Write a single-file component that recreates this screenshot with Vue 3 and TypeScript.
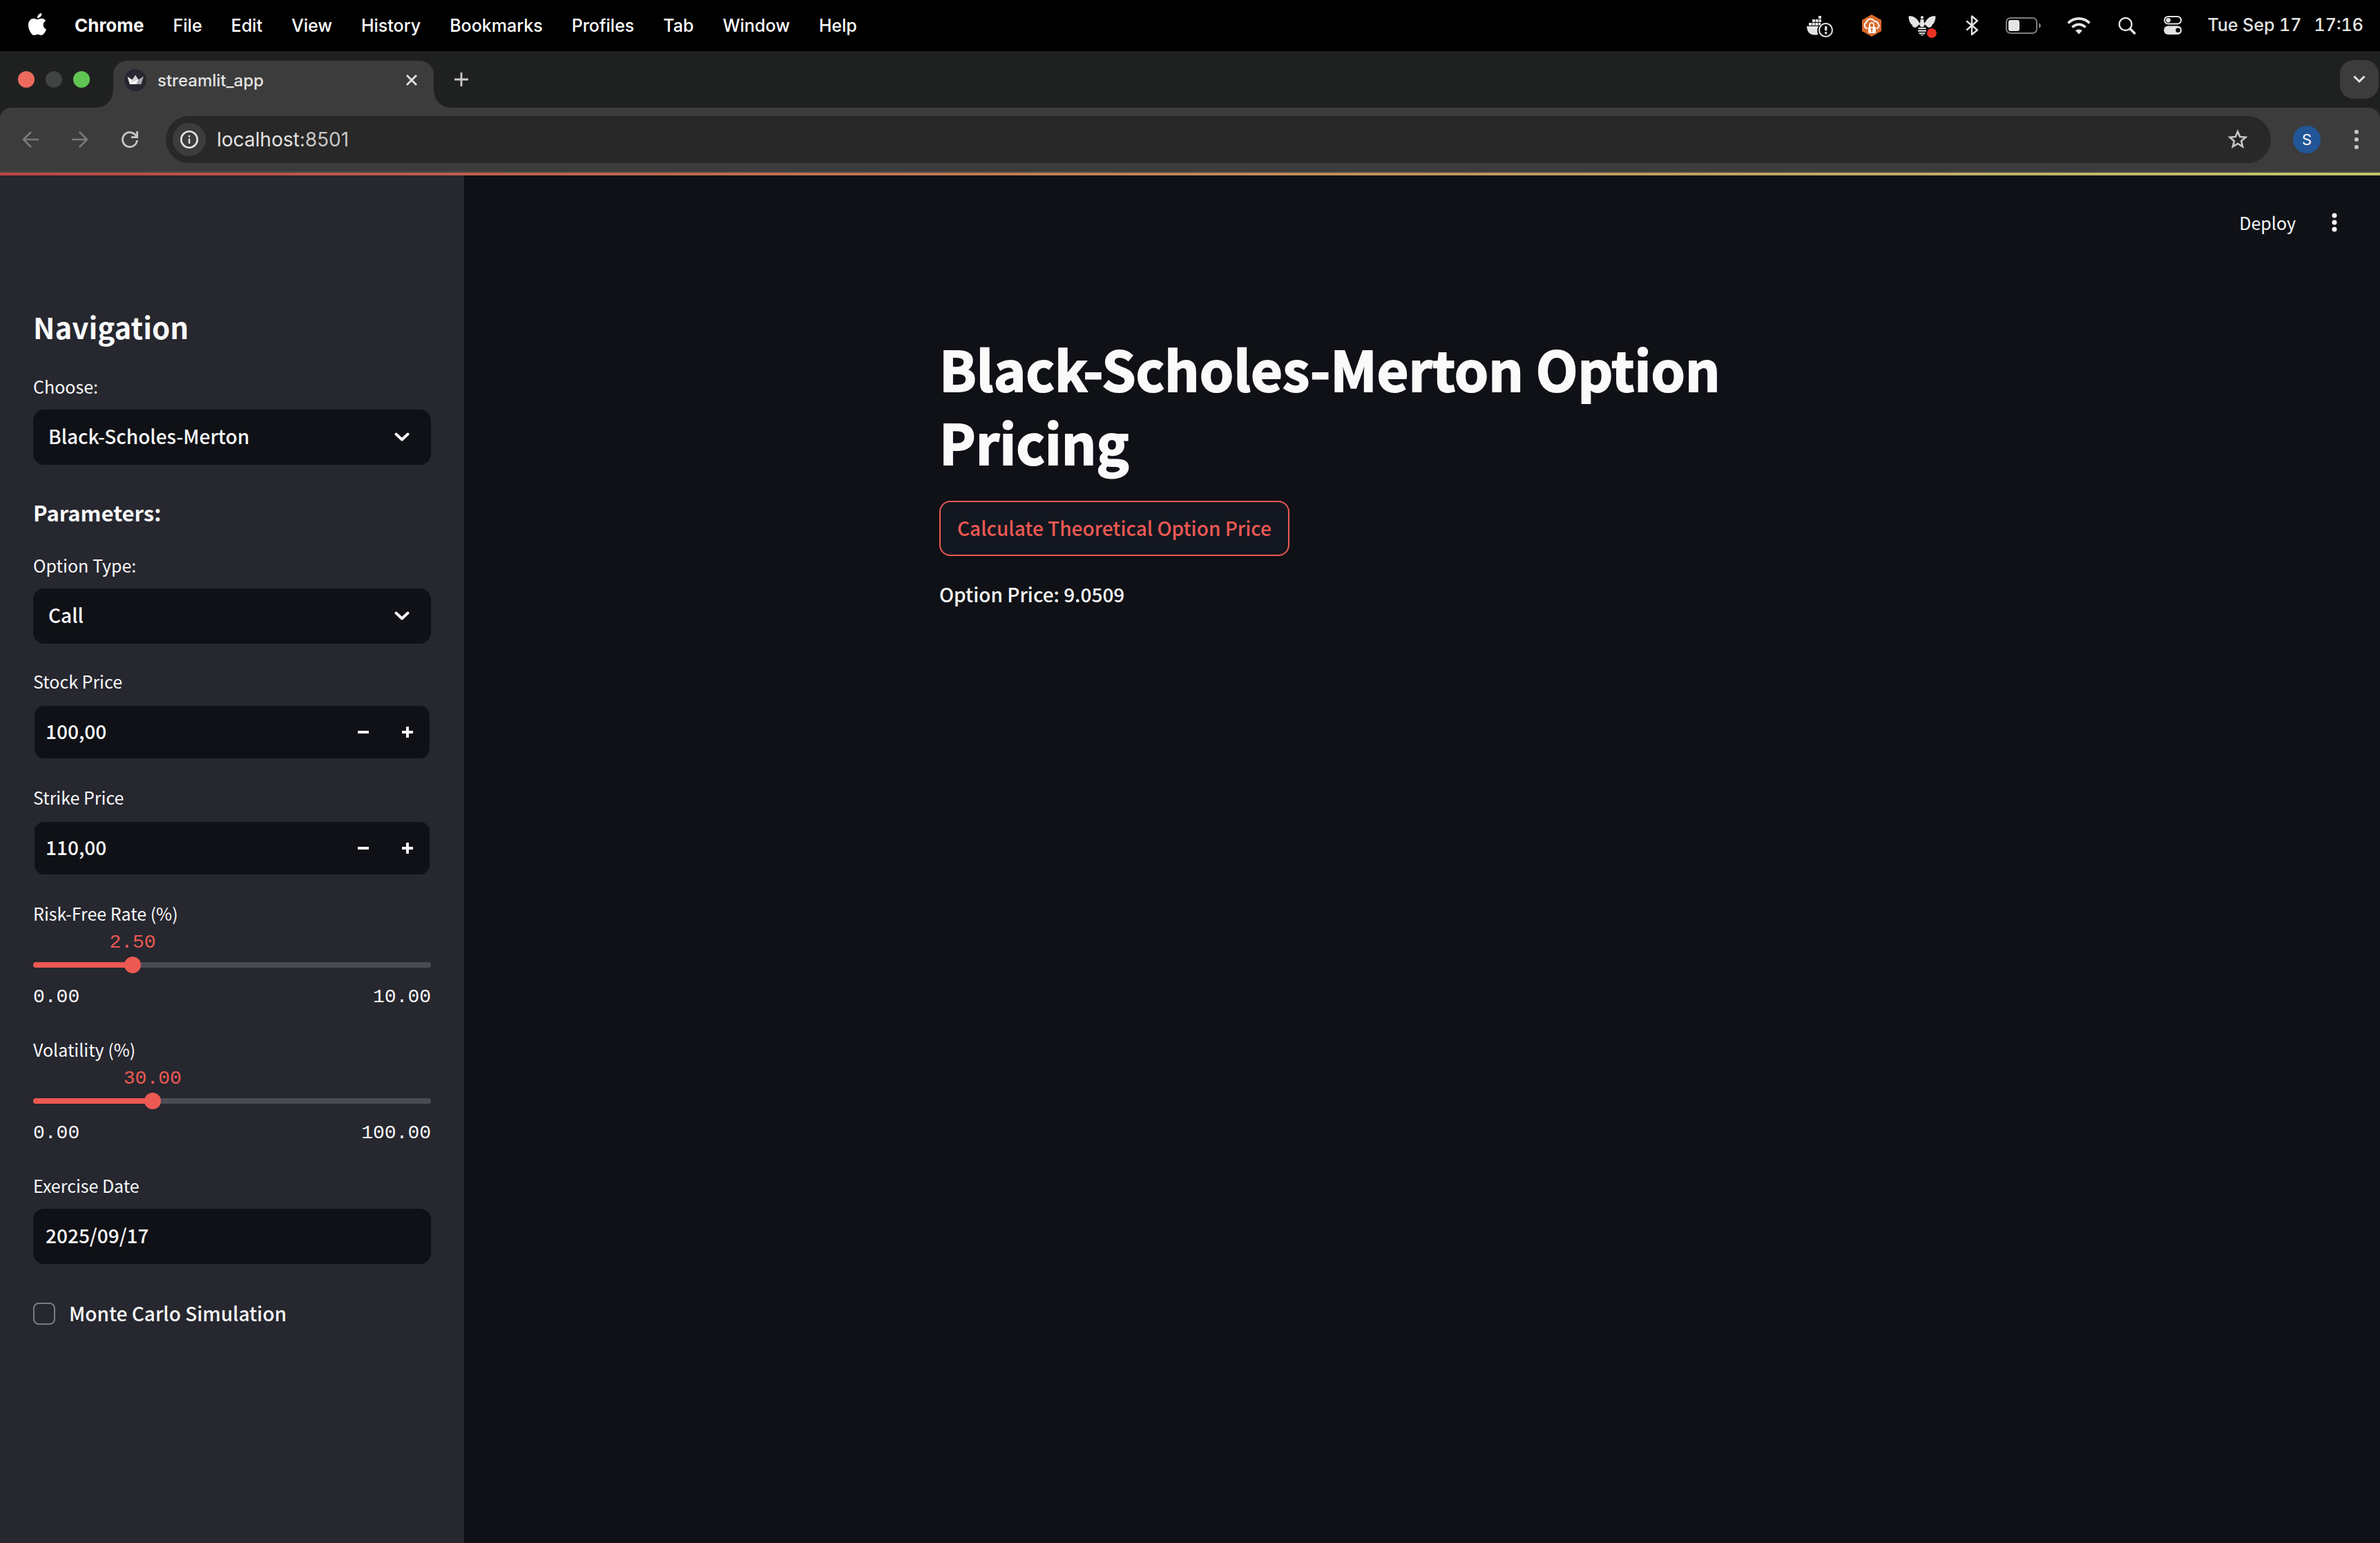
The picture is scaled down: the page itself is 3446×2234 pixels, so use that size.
<script setup lang="ts">
import { ref, computed } from 'vue'

const menus = ['File', 'Edit', 'View', 'History', 'Bookmarks', 'Profiles', 'Tab', 'Window', 'Help']

const page = ref('Black-Scholes-Merton')
const optionType = ref('Call')
const exerciseDate = ref('2025/09/17')
const monteCarlo = ref(false)
const optionPrice = ref('9.0509')

const amounts = ref([
  { id: 'stock', label: 'Stock Price', value: '100,00' },
  { id: 'strike', label: 'Strike Price', value: '110,00' },
])

const rates = ref([
  { id: 'rate', label: 'Risk-Free Rate (%)', value: 2.5, max: 10 },
  { id: 'vol', label: 'Volatility (%)', value: 30, max: 100 },
])

const sliders = computed(() =>
  rates.value.map((r) => ({ ...r, percent: `${(r.value / r.max) * 100}%` })),
)

function step(index: number, delta: number) {
  const item = amounts.value[index]
  const next = parseFloat(item.value.replace(',', '.')) + delta
  item.value = next.toFixed(2).replace('.', ',')
}

function setRate(index: number, event: Event) {
  rates.value[index].value = Number((event.target as HTMLInputElement).value)
}
</script>

<template>
  <div class="screen">
    <header class="menubar">
      <svg class="apple" viewBox="0 0 24 24" aria-hidden="true"><path fill="#fff" d="M12.152 6.896c-.948 0-2.415-1.078-3.96-1.04-2.04.027-3.91 1.183-4.961 3.014-2.117 3.675-.546 9.103 1.519 12.09 1.013 1.454 2.208 3.09 3.792 3.039 1.52-.065 2.09-.987 3.935-.987 1.831 0 2.35.987 3.96.948 1.637-.026 2.676-1.48 3.676-2.948 1.156-1.688 1.636-3.325 1.662-3.415-.039-.013-3.182-1.221-3.22-4.857-.026-3.04 2.48-4.494 2.597-4.559-1.429-2.09-3.623-2.324-4.39-2.376-2-.156-3.675 1.09-4.61 1.09zM15.53 3.83c.843-1.012 1.4-2.427 1.245-3.83-1.207.052-2.662.805-3.532 1.818-.78.896-1.454 2.338-1.273 3.714 1.338.104 2.715-.688 3.559-1.701" /></svg>
      <nav class="menus">
        <strong>Chrome</strong>
        <span v-for="m in menus" :key="m">{{ m }}</span>
      </nav>
      <div class="status">
        <svg width="43" height="40" viewBox="0 0 43 40" fill="#e4e4e4" aria-hidden="true">
          <path d="M17 6h4v4h-4zM8 11h4v4H8zM12.700 11h4v4h-4zM17.400 11h3.600v4h-3.600zM3 16h4v4H3zM7.700 16h4v4h-4zM12.400 16h4v4h-4zM17 16h3v3l-3 1z" />
          <path d="M0 21h17a13 13 0 0 0-.500 12c-9 2-16-1-16.500-12z" />
          <circle cx="27.500" cy="26.500" r="9.500" fill="none" stroke="#e4e4e4" stroke-width="2" />
          <rect x="26" y="21" width="3.400" height="6.600" rx="1" />
          <circle cx="27.700" cy="30.700" r="1.800" />
        </svg>
        <svg width="32" height="40" viewBox="0 0 32 40" aria-hidden="true">
          <path fill="#db6a2c" d="M15 4l14 8v16l-14 8-14-8V12z" />
          <path fill="none" stroke="#fff" stroke-width="2" d="M9 24H8a4.500 4.500 0 0 1-.600-8.500 5 5 0 0 1 2.600-4 6.500 6.500 0 0 1 9 2.500 4.500 4.500 0 0 1 5 3 4 4 0 0 1-1 7h-1" />
          <path fill="none" stroke="#fff" stroke-width="1.600" d="M12 22v-3a3 3 0 0 1 6 0v3" />
          <path fill="#fff" fill-rule="evenodd" d="M10 22h11v9H10zM15 23.500a1.500 1.500 0 0 0-.700 2.800V29h1.700v-2.700a1.500 1.500 0 0 0-1-2.800z" />
        </svg>
        <svg width="44" height="40" viewBox="0 0 44 40" fill="#e4e4e4" aria-hidden="true">
          <path d="M.500 6.500c6-1.500 13 3 16.500 11.500-3 1-3.500 3.500-5.500 4.500-3 1-6-.500-5.500-3C2.500 17 .500 12 .500 6.500zM39.500 6.500c-6-1.500-13 3-16.500 11.500 3 1 3.500 3.500 5.500 4.500 3 1 6-.500 5.500-3 3.500-2.500 5.500-7.500 5.500-13z" />
          <path d="M18 8a2 2 0 0 1 4 0v2h-4zM17.500 11h5v3l1.500 4-2 4h-4l-2-4 1.500-4z" />
          <path d="M14.500 23h11v2h-11zM14 26.500h12v2.200H14zM15 30.200h10l-1 2h-8zM17 33.200h6l-3 1.600z" />
          <circle cx="34" cy="31" r="7" fill="#ea3323" />
        </svg>
        <svg width="25" height="40" viewBox="0 0 25 40" aria-hidden="true">
          <path fill="none" stroke="#e4e4e4" stroke-width="2.400" stroke-linecap="round" stroke-linejoin="round" d="M5 14l15 12.500-8 6.500V6.500l8 6.500L5 26" />
        </svg>
        <svg width="52" height="40" viewBox="0 0 52 40" aria-hidden="true">
          <rect x="1" y="9" width="44" height="22" rx="6" fill="none" stroke="#7d7d7d" stroke-width="2" />
          <rect x="4" y="12" width="16" height="16" rx="3" fill="#e4e4e4" />
          <path d="M48 16.500c4 1 4 6 0 7z" fill="#7d7d7d" />
        </svg>
        <svg width="38" height="40" viewBox="0 0 38 40" fill="none" stroke="#e4e4e4" stroke-width="3.800" aria-hidden="true">
          <path d="M2.500 16.500a21.500 21.500 0 0 1 31 0M8.500 22.500a13 13 0 0 1 19 0" />
          <path fill="#e4e4e4" stroke="none" d="M18 32.500l5-5.200a7.500 7.500 0 0 0-10 0z" />
        </svg>
        <svg width="30" height="40" viewBox="0 0 30 40" fill="none" stroke="#e4e4e4" aria-hidden="true">
          <circle cx="11.500" cy="18" r="9" stroke-width="2.400" /><path stroke-width="3.600" stroke-linecap="round" d="M18.500 25l6 6" />
        </svg>
        <svg width="28" height="40" viewBox="0 0 28 40" aria-hidden="true">
          <rect x="2" y="7" width="24" height="10.500" rx="5.250" fill="none" stroke="#e4e4e4" stroke-width="2" />
          <circle cx="7.500" cy="12.300" r="3.300" fill="#e4e4e4" />
          <rect x="1" y="20.500" width="26" height="12.500" rx="6.250" fill="#e4e4e4" />
          <circle cx="21.500" cy="26.700" r="3.300" fill="#000" />
        </svg>
        <span class="clock"><span>Tue Sep 17</span><span>17:16</span></span>
      </div>
    </header>

    <div class="tabstrip">
      <div class="lights"><i class="red"></i><i class="grey"></i><i class="green"></i></div>
      <div class="tab">
        <svg width="32" height="32" viewBox="0 0 32 32" aria-hidden="true">
          <circle cx="16" cy="16" r="16" fill="#262730" />
          <path fill="#fff" d="M4.500 11l7 4.500L16 9l4.500 6.500 7-4.500-3.500 11H8z" />
          <path fill="#d0d0d4" d="M16 9l4.500 6.500-11.500 4z" /><path fill="#a9a9b0" d="M27.500 11l-7 4.500L17 22h7z" />
        </svg>
        <span class="tabtitle">streamlit_app</span>
        <button class="bare" type="button" aria-label="Close tab"><svg width="16" height="16" viewBox="0 0 16 16"><path d="M1 1l14 14M15 1L1 15" stroke="#e3e3e3" stroke-width="2.800" /></svg></button>
      </div>
      <button class="bare newtab" type="button" aria-label="New tab"><svg width="20" height="20" viewBox="0 0 20 20"><path d="M10 0v20M0 10h20" stroke="#c9c9c9" stroke-width="2.800" /></svg></button>
      <button class="bare tabsearch" type="button" aria-label="Search tabs"><svg width="18" height="12" viewBox="0 0 18 12"><path d="M1.500 1.500L9 9l7.500-7.500" fill="none" stroke="#e3e3e3" stroke-width="3" /></svg></button>
    </div>

    <div class="toolbar">
      <button class="bare" type="button" aria-label="Back"><svg width="24" height="24" viewBox="0 0 24 24" fill="none" stroke="#7b7b7b" stroke-width="2.600"><path d="M24 12H2M13 1L2 12l11 11" /></svg></button>
      <button class="bare" type="button" aria-label="Forward"><svg width="24" height="24" viewBox="0 0 24 24" fill="none" stroke="#7b7b7b" stroke-width="2.600"><path d="M0 12h22M11 1l11 11-11 11" /></svg></button>
      <button class="bare" type="button" aria-label="Reload"><svg width="24" height="24" viewBox="0 0 24 24" fill="none" stroke="#c7c7c7" stroke-width="2.800"><path d="M22.500 13A10.500 10.500 0 1 1 19.500 4.700l3 3M22.600 0v8.600H14" /></svg></button>
      <div class="omnibox">
        <span class="info"><svg width="26" height="26" viewBox="0 0 26 26" fill="none" stroke="#e3e3e3"><circle cx="13" cy="13" r="11.700" stroke-width="2.600" /><path d="M13 11.500V19M13 7v2.500" stroke-width="2.400" /></svg></span>
        <span class="url">localhost<span>:8501</span></span>
        <button class="bare" type="button" aria-label="Bookmark this tab"><svg width="30" height="30" viewBox="0 0 30 30" fill="none" stroke="#c7c7c7" stroke-width="2.600"><path d="M15 3.500l3.200 7.600 8.200.700-6.200 5.400 1.900 8L15 20.900l-7.100 4.300 1.900-8-6.200-5.400 8.200-.700z" /></svg></button>
      </div>
      <span class="avatar">S</span>
      <button class="bare" type="button" aria-label="Browser menu"><svg width="6" height="28" viewBox="0 0 6 28" fill="#c7c7c7"><circle cx="3" cy="3" r="3" /><circle cx="3" cy="14" r="3" /><circle cx="3" cy="25" r="3" /></svg></button>
    </div>
    <div class="stripe"></div>

    <div class="app">
      <aside class="sidebar">
        <h2>Navigation</h2>

        <div class="field">
          <label for="page">Choose:</label>
          <div class="selectbox">
            <select id="page" v-model="page"><option>Black-Scholes-Merton</option></select>
            <svg width="22" height="14" viewBox="0 0 22 14"><path d="M2.500 2.500L11 10.500l8.500-8" fill="none" stroke="#fafafa" stroke-width="4" stroke-linecap="round" stroke-linejoin="round" /></svg>
          </div>
        </div>

        <h3>Parameters:</h3>

        <div class="field">
          <label for="type">Option Type:</label>
          <div class="selectbox">
            <select id="type" v-model="optionType"><option>Call</option><option>Put</option></select>
            <svg width="22" height="14" viewBox="0 0 22 14"><path d="M2.500 2.500L11 10.500l8.500-8" fill="none" stroke="#fafafa" stroke-width="4" stroke-linecap="round" stroke-linejoin="round" /></svg>
          </div>
        </div>

        <div v-for="(a, i) in amounts" :key="a.id" class="field">
          <label :for="a.id">{{ a.label }}</label>
          <div class="numberbox">
            <input :id="a.id" v-model="a.value" type="text" inputmode="decimal" />
            <button type="button" :aria-label="`Decrease ${a.label}`" @click="step(i, -1)"><svg width="16" height="16" viewBox="0 0 16 16"><path d="M0 8h16" stroke="#fafafa" stroke-width="4" /></svg></button>
            <button type="button" :aria-label="`Increase ${a.label}`" @click="step(i, 1)"><svg width="16" height="16" viewBox="0 0 16 16"><path d="M0 8h16M8 0v16" stroke="#fafafa" stroke-width="4" /></svg></button>
          </div>
        </div>

        <div v-for="(s, i) in sliders" :key="s.id" class="field slider">
          <label :for="s.id">{{ s.label }}</label>
          <output :for="s.id" :style="{ marginLeft: s.percent }">{{ s.value.toFixed(2) }}</output>
          <div class="rail">
            <div class="track"><div class="fill" :style="{ width: s.percent }"></div></div>
            <input :id="s.id" type="range" min="0" :max="s.max" step="0.01" :value="s.value" @input="setRate(i, $event)" />
          </div>
          <div class="ticks"><span>0.00</span><span>{{ s.max.toFixed(2) }}</span></div>
        </div>

        <div class="field">
          <label for="date">Exercise Date</label>
          <input id="date" v-model="exerciseDate" class="datebox" type="text" />
        </div>

        <label class="check"><input v-model="monteCarlo" type="checkbox" /><span>Monte Carlo Simulation</span></label>
      </aside>

      <main class="main">
        <div class="actions">
          <button class="bare deploy" type="button">Deploy</button>
          <button class="bare" type="button" aria-label="Main menu"><svg width="8" height="28" viewBox="0 0 8 28" fill="#fafafa"><circle cx="4" cy="4" r="3.500" /><circle cx="4" cy="14" r="3.500" /><circle cx="4" cy="24" r="3.500" /></svg></button>
        </div>
        <section class="content">
          <h1>Black-Scholes-Merton Option<br />Pricing</h1>
          <button class="calculate" type="button">Calculate Theoretical Option Price</button>
          <p>Option Price: {{ optionPrice }}</p>
        </section>
      </main>
    </div>
  </div>
</template>

<style>
html,
body,
#app {
  height: 100%;
}

body {
  background: #0f1116;
}
</style>

<style scoped>
* {
  box-sizing: border-box;
}

.screen {
  display: flex;
  flex-direction: column;
  min-height: 100%;
  background: #1f2120;
  color: #fafafa;
  font-family: "Noto Sans CJK SC", "Open Sans", sans-serif;
  font-size: 28px;
  font-weight: 500;
}

svg {
  display: block;
  flex: none;
}

button,
input,
select {
  margin: 0;
  padding: 0;
  border: 0;
  background: none;
  color: inherit;
  font: inherit;
  appearance: none;
}

.menubar,
.tabstrip,
.toolbar {
  display: flex;
  align-items: center;
  font-family: Inter, "Liberation Sans", sans-serif;
  font-weight: 400;
}

.menubar {
  height: 74px;
  padding: 0 24px 0 38px;
  background: #000;
  color: #fff;
  font-size: 25px;
  font-weight: 500;
}

.apple {
  width: 32px;
  height: 32px;
  margin-bottom: 4px;
}

.menus {
  display: flex;
  align-items: baseline;
  gap: 42px;
  margin-left: 38px;
  padding-bottom: 2px;
}

.menus strong {
  font-size: 26px;
}

.status {
  display: flex;
  align-items: center;
  gap: 36px;
  margin-left: auto;
}

.clock {
  display: flex;
  gap: 18px;
  padding-bottom: 2px;
  color: #e4e4e4;
  font-variant-numeric: tabular-nums;
}

.tabstrip {
  height: 82px;
  padding: 0 2px 0 26px;
}

.lights {
  display: flex;
  gap: 16px;
}

.lights i {
  width: 24px;
  height: 24px;
  border-radius: 50%;
}

.red {
  background: #ec6a5e;
}

.grey {
  background: #424443;
}

.green {
  background: #61c554;
}

.tab {
  position: relative;
  display: flex;
  align-items: center;
  align-self: flex-end;
  width: 464px;
  height: 68px;
  margin-left: 34px;
  padding: 0 24px 12px 16px;
  border-radius: 20px 20px 0 0;
  background: #3c3c3c;
  color: #e3e3e3;
  font-size: 24px;
}

.tab::before,
.tab::after {
  content: "";
  position: absolute;
  bottom: 0;
  width: 24px;
  height: 24px;
}

.tab::before {
  right: 100%;
  background: radial-gradient(circle at 0 0, transparent 23px, #3c3c3c 24px);
}

.tab::after {
  left: 100%;
  background: radial-gradient(circle at 100% 0, transparent 23px, #3c3c3c 24px);
}

.tabtitle {
  flex: 1;
  margin-left: 16px;
  font-weight: 500;
}

.newtab {
  margin-left: 30px;
}

.tabsearch {
  display: grid;
  place-items: center;
  width: 56px;
  height: 56px;
  margin-left: auto;
  border-radius: 20px;
  background: #3c3c3c;
}

.toolbar {
  gap: 48px;
  height: 94px;
  padding: 0 31px 0 32px;
  border-bottom: 2px solid #484848;
  border-radius: 16px 16px 0 0;
  background: #3c3c3c;
}

.omnibox {
  display: flex;
  flex: 1;
  align-items: center;
  height: 68px;
  margin-left: -8px;
  padding: 0 33px 0 10px;
  border-radius: 34px;
  background: #282828;
  color: #e3e3e3;
  font-size: 28px;
}

.info {
  display: grid;
  place-items: center;
  width: 48px;
  height: 48px;
  border-radius: 50%;
  background: #3c3c3c;
}

.url {
  flex: 1;
  margin-left: 16px;
}

.url span {
  color: #c7c7c7;
}

.avatar {
  width: 40px;
  height: 40px;
  margin: 0 1px 0 -16px;
  border-radius: 50%;
  background: #235697;
  color: #fff;
  font-size: 22px;
  line-height: 40px;
  text-align: center;
}

.stripe {
  height: 4px;
  background: linear-gradient(90deg, #bd4543, #c08355 48%, #c3c66e);
}

.app {
  display: flex;
  flex: 1;
  background: #0f1116;
}

.sidebar {
  display: flex;
  flex-direction: column;
  gap: 32px;
  width: 672px;
  padding: 190px 48px 48px;
  background: #26272f;
}

h1,
h2,
h3,
p {
  margin: 0;
}

h2 {
  margin-bottom: 3px;
  font-size: 42px;
  line-height: 58px;
}

h3 {
  padding-top: 15px;
  font-size: 31px;
  line-height: 44px;
}

.field {
  display: flex;
  flex-direction: column;
}

.field label {
  margin-bottom: 12px;
  font-size: 25px;
  font-weight: 400;
  line-height: 44px;
}

.selectbox {
  display: grid;
  align-items: center;
}

.selectbox > * {
  grid-area: 1 / 1;
}

.selectbox svg {
  justify-self: end;
  margin-right: 31px;
  pointer-events: none;
}

select,
.datebox,
.numberbox {
  width: 100%;
  height: 80px;
  border-radius: 16px;
  background: #0f1116;
}

select {
  padding: 0 64px 4px 22px;
}

.datebox {
  padding: 0 18px 4px;
}

.numberbox {
  display: flex;
  border: 2px solid #26272f;
}

.numberbox input {
  flex: 1;
  min-width: 0;
  padding: 0 16px 4px;
}

.numberbox button {
  display: grid;
  place-items: center;
  width: 64px;
}

.slider label {
  margin-bottom: 5px;
}

output {
  display: flex;
  justify-content: center;
  width: 0;
  color: #ec5953;
}

output,
.ticks {
  font-family: "Liberation Mono", monospace;
  font-size: 28px;
  font-weight: 400;
  line-height: 32px;
}

.rail {
  display: grid;
  align-items: center;
  height: 32px;
}

.rail > * {
  grid-area: 1 / 1;
}

.track {
  height: 8px;
  border-radius: 4px;
  background: #4a4b55;
  overflow: hidden;
}

.fill {
  height: 100%;
  background: #ec5953;
}

.rail input {
  width: calc(100% + 24px);
  height: 24px;
  margin: 0 -12px;
}

.rail input::-webkit-slider-thumb {
  width: 24px;
  height: 24px;
  border-radius: 50%;
  background: #ec5953;
  appearance: none;
}

.ticks {
  display: flex;
  justify-content: space-between;
  padding: 15px 0 5px;
}

.check {
  display: flex;
  align-items: center;
  gap: 20px;
  height: 48px;
  margin-top: 16px;
}

.check input {
  width: 32px;
  height: 32px;
  border: 2px solid #7c7d83;
  border-radius: 8px;
}

.check span {
  padding-bottom: 3px;
}

.main {
  flex: 1;
}

.actions {
  display: flex;
  align-items: center;
  justify-content: flex-end;
  gap: 52px;
  height: 136px;
  padding-right: 62px;
}

.deploy {
  font-size: 25px;
  font-weight: 400;
}

.content {
  max-width: 1398px;
  margin: 0 auto;
  padding-top: 90px;
}

h1 {
  font-size: 79px;
  line-height: 106px;
  -webkit-text-stroke: 2px #fafafa;
}

.calculate {
  height: 80px;
  margin: 33px 0 32px;
  padding: 0 24px 3px;
  border: 2px solid #ec5953;
  border-radius: 16px;
  background: #131720;
  color: #ec5953;
}

p {
  line-height: 46px;
}
</style>
